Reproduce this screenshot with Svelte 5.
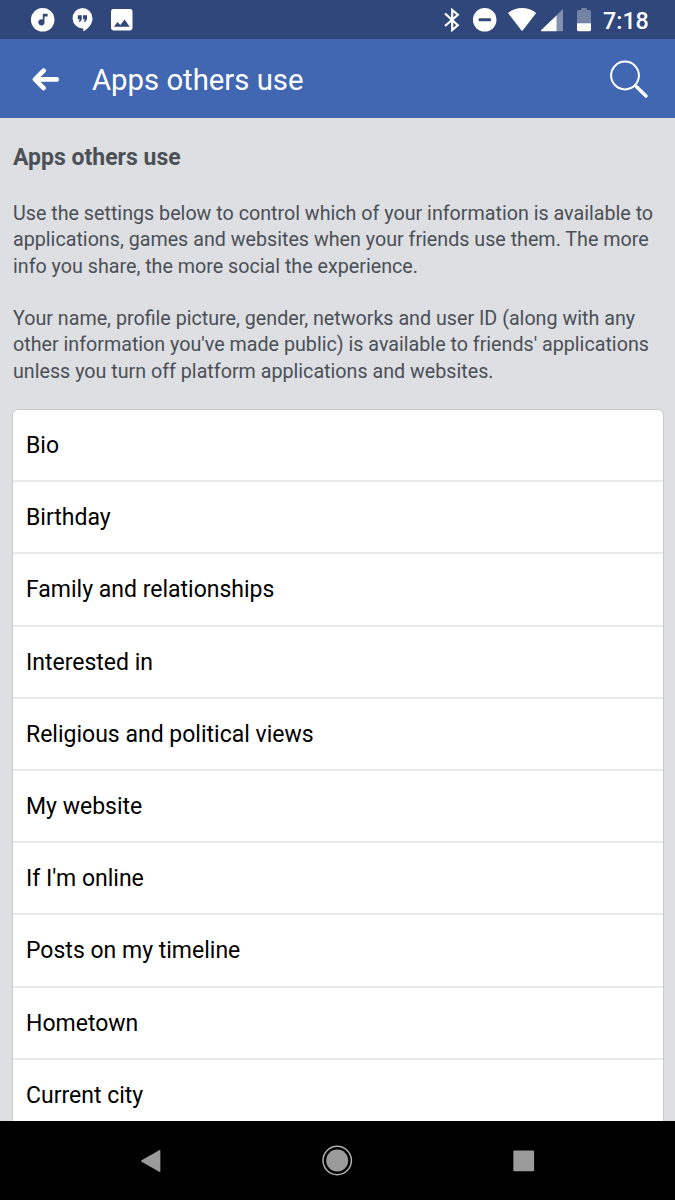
<script lang="ts">
    const title = "Apps others use";

    const paragraphs: string[][] = [
        [
            "Use the settings below to control which of your information is available to",
            "applications, games and websites when your friends use them. The more",
            "info you share, the more social the experience."
        ],
        [
            "Your name, profile picture, gender, networks and user ID (along with any",
            "other information you've made public) is available to friends' applications",
            "unless you turn off platform applications and websites."
        ]
    ];

    const settings: string[] = [
        "Bio",
        "Birthday",
        "Family and relationships",
        "Interested in",
        "Religious and political views",
        "My website",
        "If I'm online",
        "Posts on my timeline",
        "Hometown",
        "Current city"
    ];
</script>

<div class="screen">
    <div class="status-bar">
        <div class="notifications">
            <svg width="24" height="24" viewBox="0 0 24 24">
                <circle cx="11.7" cy="11.8" r="11.8" fill="#fff" />
                <path d="M11.8 5.8h4.8v2.7h-3.1v5.9a3.1 3.1 0 1 1-1.7-2.7z" fill="#2f477a" />
            </svg>
            <svg width="22" height="24" viewBox="0 0 22 24">
                <path d="M10.3 0a10.2 10.2 0 0 1 10.2 10.2c0 5.6-4 10.6-9.2 13.2v-3A10.2 10.2 0 1 1 10.3 0z" fill="#fff" />
                <path d="M5.8 7.2h4v4l-1.5 2.6H6.6l1.2-2.6h-2zM11 7.2h4v4l-1.5 2.6h-1.7l1.2-2.6h-2z" fill="#2f477a" />
            </svg>
            <svg width="22" height="24" viewBox="0 0 22 24">
                <rect x="0" y="1" width="21.5" height="21.5" rx="2.4" fill="#fff" />
                <path d="M2.8 18.7l3.8-4.8 2.7 3.2 4.3-5.6 5.1 7.2z" fill="#2f477a" />
            </svg>
        </div>
        <div class="indicators">
            <svg width="16" height="24" viewBox="0 0 16 24">
                <path d="M1 5.5l12.8 11.8L8.2 22V2l5.6 4.7L1 18" fill="none" stroke="#fff" stroke-width="2.2" />
            </svg>
            <svg class="dnd" width="24" height="24" viewBox="0 0 24 24">
                <circle cx="11.7" cy="11.8" r="11.8" fill="#fff" />
                <rect x="5.6" y="10.2" width="12.4" height="3" rx="1" fill="#2f477a" />
            </svg>
            <svg class="wifi" width="29" height="24" viewBox="0 0 29 24">
                <path d="M0 5.1C8.2-1.7 20-1.7 28.2 5.1L14.9 22.2q-.8 1-1.6 0z" fill="#fff" />
            </svg>
            <svg class="signal" width="23" height="24" viewBox="0 0 23 24">
                <path d="M22 1v22.3h-6.3V7.3z" fill="#8391b0" />
                <path d="M15.7 7.3v16H.7q-1.3-.3-.4-1.3z" fill="#fff" />
            </svg>
            <svg class="battery" width="15" height="24" viewBox="0 0 15 24">
                <path d="M4.3 0h5.5v2h2.7q1.5 0 1.5 1.5v12.1H0V3.5Q0 2 1.5 2h2.8z" fill="#7484a7" />
                <path d="M0 15.3h14v6.5q0 1.5-1.5 1.5h-11q-1.5 0-1.5-1.5z" fill="#fff" />
            </svg>
            <span class="clock">7:18</span>
        </div>
    </div>

    <header class="app-bar">
        <button class="back" aria-label="Back">
            <svg width="28" height="24" viewBox="0 0 28 24">
                <path d="M11.6 3.7L3 12.4l8.6 8.7M3.6 12.4h21.2" fill="none" stroke="#fff" stroke-width="4.6" stroke-linecap="round" stroke-linejoin="round" />
            </svg>
        </button>
        <div class="title">{title}</div>
        <button class="search" aria-label="Search">
            <svg width="40" height="40" viewBox="0 0 40 40">
                <circle cx="15" cy="16.5" r="13.9" fill="none" stroke="#fff" stroke-width="2" />
                <path d="M24.5 26.2l3 2.5" stroke="#fff" stroke-width="2.4" />
                <path d="M26.8 28l9.2 9" stroke="#fff" stroke-width="3.4" stroke-linecap="round" />
            </svg>
        </button>
    </header>

    <main>
        <h1>{title}</h1>
        {#each paragraphs as lines}
            <p>
                {#each lines as line}
                    <span class="line">{line}</span>
                {/each}
            </p>
        {/each}
        <ul class="settings">
            {#each settings as setting}
                <li>{setting}</li>
            {/each}
        </ul>
    </main>

    <nav>
        <svg width="22" height="24" viewBox="0 0 22 24">
            <path d="M19.2 1.2q1.2-.5 1.2.8v20q0 1.3-1.2.8L1.6 12.8q-1.2-.8 0-1.6z" fill="#9b9b9b" />
        </svg>
        <svg width="32" height="32" viewBox="0 0 32 32">
            <circle cx="15.2" cy="15.5" r="14.2" fill="none" stroke="#b0b0b0" stroke-width="1.5" />
            <circle cx="15.2" cy="15.5" r="11" fill="#9b9b9b" />
        </svg>
        <svg width="22" height="22" viewBox="0 0 22 22">
            <rect x=".3" y=".5" width="20.8" height="20.8" rx="1" fill="#9b9b9b" />
        </svg>
    </nav>
</div>

<style>
    :global(body) {
        margin: 0;
        background: #000;
    }

    .screen {
        display: flex;
        flex-direction: column;
        width: 675px;
        height: 1200px;
        overflow: hidden;
        background: #dddfe3;
        font-family: Roboto, "Liberation Sans", sans-serif;
    }

    svg {
        display: block;
        flex: none;
    }

    .status-bar {
        display: flex;
        justify-content: space-between;
        flex: none;
        height: 39px;
        box-sizing: border-box;
        padding: 8px 26px 0 31px;
        background: #2f477a;
        color: #fff;
    }

    .notifications, .indicators {
        display: flex;
        height: 24px;
    }

    .notifications {
        gap: 17px;
    }

    .dnd {
        margin-left: 13px;
    }

    .wifi {
        margin-left: 11px;
    }

    .signal {
        margin-left: 4px;
    }

    .battery {
        margin-left: 13px;
    }

    .clock {
        width: 46px;
        margin-left: 11px;
        font-size: 23.3px;
        font-weight: 500;
        line-height: 26px;
        white-space: nowrap;
    }

    .app-bar {
        display: flex;
        align-items: center;
        flex: none;
        height: 79px;
        box-sizing: border-box;
        padding: 0 25px 0 32px;
        background: #4267b2;
        color: #fff;
    }

    button {
        padding: 0;
        border: 0;
        background: none;
    }

    .title {
        flex: 1;
        margin-left: 32px;
        padding-top: 3px;
        font-size: 29.3px;
        line-height: 40px;
    }

    main {
        flex: 1;
        min-height: 0;
        overflow: hidden;
        box-sizing: border-box;
        padding: 26px 11px 0 12px;
        color: #4b4f56;
    }

    h1 {
        margin: 0 0 30px 1px;
        font-size: 23px;
        font-weight: 700;
        line-height: 27px;
    }

    p {
        margin: 0 0 26.25px 1px;
        font-size: 19.7px;
        line-height: 26.25px;
        white-space: nowrap;
    }

    p:last-of-type {
        margin-bottom: 24.25px;
    }

    .line {
        display: block;
    }

    .settings {
        margin: 0;
        padding: 0;
        list-style: none;
        border: 1px solid #c7c9cd;
        border-radius: 6px;
        background: #fff;
        color: #000;
    }

    li {
        height: 72.2px;
        box-sizing: border-box;
        padding-left: 13px;
        border-bottom: 2px solid #e8e9eb;
        font-size: 23px;
        line-height: 71px;
    }

    nav {
        display: flex;
        align-items: center;
        justify-content: space-between;
        flex: none;
        height: 79px;
        box-sizing: border-box;
        padding: 0 140px;
        background: #000;
    }
</style>
